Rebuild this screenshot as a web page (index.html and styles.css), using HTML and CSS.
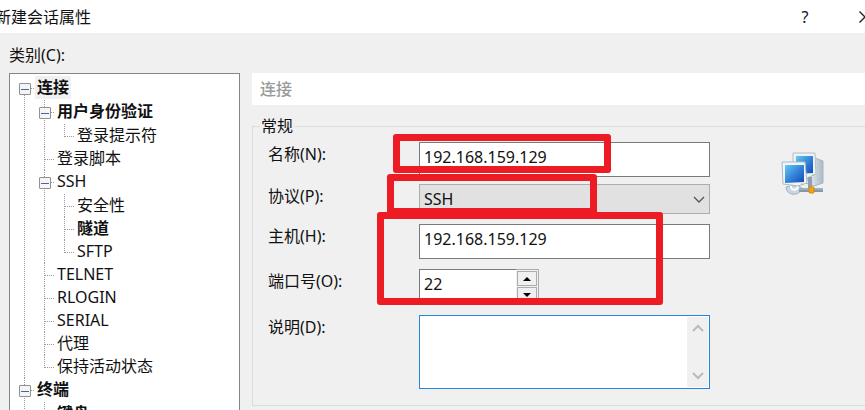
FILE: index.html
```html
<!DOCTYPE html>
<html lang="zh-CN">

<head>
    <meta charset="UTF-8">
    <meta name="viewport" content="width=device-width, initial-scale=1.0">
    <title>新建会话属性</title>
    <link rel="stylesheet" href="styles.css">
</head>

<body>
    <header class="titlebar">
        <h1>新建会话属性</h1>
        <button type="button" class="help" aria-label="帮助">?</button>
        <button type="button" class="close" aria-label="关闭">
            <svg width="12" height="12" viewBox="0 0 12 12"><path d="M0.5 0.5l11 11M11.5 0.5l-11 11" fill="none" stroke="#222" stroke-width="1.4"/></svg>
        </button>
    </header>

    <p class="category">类别(C):</p>

    <main class="dialog">
        <nav class="tree" aria-label="类别">
            <ul>
                <li>
                    <div class="node"><button type="button" class="toggle" aria-label="折叠"></button><b class="selected">连接</b></div>
                    <ul>
                        <li>
                            <div class="node"><button type="button" class="toggle" aria-label="折叠"></button><b>用户身份验证</b></div>
                            <ul>
                                <li><div class="node">登录提示符</div></li>
                            </ul>
                        </li>
                        <li><div class="node">登录脚本</div></li>
                        <li>
                            <div class="node"><button type="button" class="toggle" aria-label="折叠"></button>SSH</div>
                            <ul>
                                <li><div class="node">安全性</div></li>
                                <li><div class="node"><b>隧道</b></div></li>
                                <li><div class="node">SFTP</div></li>
                            </ul>
                        </li>
                        <li><div class="node">TELNET</div></li>
                        <li><div class="node">RLOGIN</div></li>
                        <li><div class="node">SERIAL</div></li>
                        <li><div class="node">代理</div></li>
                        <li><div class="node">保持活动状态</div></li>
                    </ul>
                </li>
                <li class="open">
                    <div class="node"><button type="button" class="toggle" aria-label="折叠"></button><b>终端</b></div>
                    <ul>
                        <li class="open"><div class="node"><b>键盘</b></div></li>
                    </ul>
                </li>
            </ul>
        </nav>

        <section class="panel">
            <h2>连接</h2>
            <fieldset>
                <legend>常规</legend>
                <form class="form">
                    <label for="name">名称(N):</label>
                    <input type="text" id="name" value="192.168.159.129">

                    <label for="protocol">协议(P):</label>
                    <div class="select">
                        <select id="protocol">
                            <option>SSH</option>
                        </select>
                        <svg width="12" height="8" viewBox="0 0 12 8"><path d="M1 1l5 5 5-5" fill="none" stroke="#555" stroke-width="1.3"/></svg>
                    </div>

                    <label for="host">主机(H):</label>
                    <input type="text" id="host" value="192.168.159.129">

                    <label for="port">端口号(O):</label>
                    <div class="spinner">
                        <input type="text" id="port" value="22">
                        <div class="arrows">
                            <button type="button" aria-label="增加"><svg width="8" height="4" viewBox="0 0 8 4"><path d="M0 4l4-4 4 4z"/></svg></button>
                            <button type="button" aria-label="减少"><svg width="8" height="4" viewBox="0 0 8 4"><path d="M0 0l4 4 4-4z"/></svg></button>
                        </div>
                    </div>

                    <label for="note">说明(D):</label>
                    <div class="note">
                        <textarea id="note"></textarea>
                        <div class="scroll">
                            <svg width="12" height="8" viewBox="0 0 12 8"><path d="M1 7l5-5 5 5" fill="none" stroke="#bbb" stroke-width="2"/></svg>
                            <svg width="12" height="8" viewBox="0 0 12 8"><path d="M1 1l5 5 5-5" fill="none" stroke="#bbb" stroke-width="2"/></svg>
                        </div>
                    </div>

                    <svg class="computers" width="44" height="46" viewBox="0 0 44 46">
                        <defs>
                            <linearGradient id="screen" x1="0" y1="0" x2="1" y2="1">
                                <stop offset="0" stop-color="#69c8f2"/>
                                <stop offset="0.5" stop-color="#3485da"/>
                                <stop offset="1" stop-color="#124bb0"/>
                            </linearGradient>
                            <linearGradient id="tower" x1="0" x2="1">
                                <stop offset="0" stop-color="#f3f7fa"/>
                                <stop offset="1" stop-color="#a9bac8"/>
                            </linearGradient>
                        </defs>
                        <path d="M34 6l8 3v22l-9 3-8-3z" fill="url(#tower)" stroke="#a7b6c3"/>
                        <path d="M12 1h22l1 21-9 4-14-2z" fill="#edf2f5" stroke="#b3c0ca"/>
                        <path d="M15 4h17v17l-17 1z" fill="url(#screen)"/>
                        <path d="M27 25h4v12h-4z" fill="#8fa1b0"/>
                        <path d="M5 35c0 9 14 10 16 1l-5-3z" fill="#c9d7e1" stroke="#9fb3c2"/>
                        <path d="M10 34c0 5 6 5 7 0" fill="none" stroke="#fff" stroke-width="2"/>
                        <path d="M18 36h24v4h-24z" fill="#8799a8"/>
                        <path d="M18 37h24" stroke="#b9c6d0"/>
                        <path d="M1 10h23l2 21-9 3-15-2z" fill="#f1f5f7" stroke="#a9b9c5"/>
                        <path d="M4 13h19v17l-19 1z" fill="url(#screen)"/>
                        <path d="M20 32h2M31 23h2" stroke="#8bdc50" stroke-width="1"/>
                        <rect x="28" y="35" width="5" height="6" rx="1" fill="#f5a313" stroke="#d7840b"/>
                    </svg>

                    <span class="mark mark-name"></span>
                    <span class="mark mark-protocol"></span>
                    <span class="mark mark-host"></span>
                </form>
            </fieldset>
        </section>
    </main>
</body>

</html>
```
FILE: styles.css
```css
* {
    box-sizing: border-box;
}

body {
    display: flex;
    flex-direction: column;
    height: 100vh;
    margin: 0;
    overflow: hidden;
    background-color: #f0f0f0;
    color: #111;
    font-family: "Noto Sans", "Noto Sans CJK SC", sans-serif;
    font-size: 16px;
    line-height: 24px;
}

button,
input,
select,
textarea {
    font: inherit;
    color: inherit;
    border-radius: 0;
    outline: none;
}

button {
    padding: 0;
    border: none;
    background: none;
}

h1,
h2,
p,
ul {
    margin: 0;
    padding: 0;
    font-size: 16px;
    font-weight: normal;
}

.titlebar {
    display: flex;
    flex: none;
    align-items: center;
    height: 33px;
    margin: 0 -8px 0 -5px;
    background-color: #fff;
}

.titlebar h1 {
    flex: 1;
}

.help {
    width: 16px;
    margin-right: 44px;
}

.close {
    display: flex;
    justify-content: center;
    width: 16px;
}

.category {
    padding: 10px 9px 6px;
}

.dialog {
    display: flex;
    flex: 1;
    gap: 12px;
    min-height: 0;
    padding-left: 9px;
}

/* category tree */
.tree {
    flex: none;
    width: 231px;
    padding: 2px 9px;
    overflow: hidden;
    border: 1px solid #828790;
    border-bottom: none;
    background-color: #fff;
}

.tree ul {
    list-style: none;
}

.tree ul ul {
    padding: 1px 0 0 20px;
}

.tree li {
    position: relative;
}

.tree li::before {
    content: "";
    position: absolute;
    top: 0;
    bottom: 0;
    left: 5px;
    border-left: 1px dotted #999;
}

.tree > ul > li:first-child::before {
    top: 14px;
}

.tree li:last-child:not(.open)::before {
    bottom: auto;
    height: 13px;
}

.node {
    position: relative;
    display: flex;
    height: 23px;
    padding-left: 18px;
    line-height: 23px;
}

.node::before {
    content: "";
    position: absolute;
    top: 12px;
    left: 6px;
    width: 9px;
    border-top: 1px dotted #999;
}

.selected {
    margin: 0 -2px;
    padding: 0 2px;
    background-color: #f0f0f0;
}

.toggle {
    position: absolute;
    top: 7px;
    left: 0;
    display: flex;
    align-items: center;
    justify-content: center;
    width: 12px;
    height: 12px;
    border: 1px solid #919191;
    border-radius: 1px;
    background-color: #f5f5f5;
}

.toggle::before {
    content: "";
    width: 8px;
    height: 1px;
    background-color: #4b63a7;
}

/* settings */
.panel {
    flex: 1;
    min-width: 0;
}

.panel h2 {
    height: 32px;
    padding-left: 8px;
    background-color: #fff;
    color: #999;
    font-weight: 500;
    line-height: 32px;
}

fieldset {
    min-width: 0;
    margin: 9px 0 0;
    padding: 4px 0 16px 15px;
    border: 1px solid #dcdcdc;
    border-right: none;
}

legend {
    margin-left: -8px;
    padding: 0 2px 0 1px;
}

.form {
    position: relative;
    display: grid;
    grid-template-columns: 151px 1fr 155px;
    grid-template-rows: 42px 40px 45px 46px 74px;
    align-items: start;
}

.form label {
    grid-column: 1;
    line-height: 25px;
}

.form > input {
    width: 100%;
    height: 35px;
    padding: 0 4px 6px;
    border: 1px solid #7a7a7a;
    background-color: #fff;
}

.select {
    position: relative;
}

.select select {
    display: block;
    width: 100%;
    height: 30px;
    padding: 0 4px;
    appearance: none;
    border: 1px solid #adadad;
    background-color: #e1e1e1;
}

.select svg {
    position: absolute;
    top: 12px;
    right: 5px;
}

.spinner {
    display: flex;
    width: 120px;
    height: 35px;
    border: 1px solid #adadad;
}

.spinner input {
    flex: 1;
    min-width: 0;
    margin: -1px 0 -1px -1px;
    padding: 0 4px 6px;
    border: 1px solid #7a7a7a;
    border-right: none;
    background-color: #fff;
}

.arrows {
    display: flex;
    flex-direction: column;
    gap: 1px;
    width: 22px;
    padding: 1px;
}

.arrows button {
    display: flex;
    flex: 1;
    align-items: center;
    justify-content: center;
    border: 1px solid #adadad;
    background-color: #f0f0f0;
}

.note {
    display: flex;
    height: 74px;
    padding: 1px;
    border: 1px solid #2388db;
    background-color: #fff;
}

.note textarea {
    flex: 1;
    min-width: 0;
    padding: 4px;
    resize: none;
    border: none;
}

.scroll {
    display: flex;
    flex-direction: column;
    align-items: center;
    justify-content: space-between;
    width: 21px;
    padding: 7px 0;
    background-color: #f0f0f0;
}

.computers {
    grid-area: 1 / 3 / 3 / 4;
    margin: 10px 0 0 71px;
}

/* red frames over the fields to fill in */
.mark {
    position: absolute;
    border: 7px solid #ed1c24;
    border-radius: 3px;
    pointer-events: none;
}

.mark-name {
    top: -8px;
    left: 125px;
    width: 218px;
    height: 39px;
}

.mark-protocol {
    top: 32px;
    left: 119px;
    width: 210px;
    height: 41px;
}

.mark-host {
    top: 70px;
    left: 109px;
    width: 286px;
    height: 93px;
}
```
